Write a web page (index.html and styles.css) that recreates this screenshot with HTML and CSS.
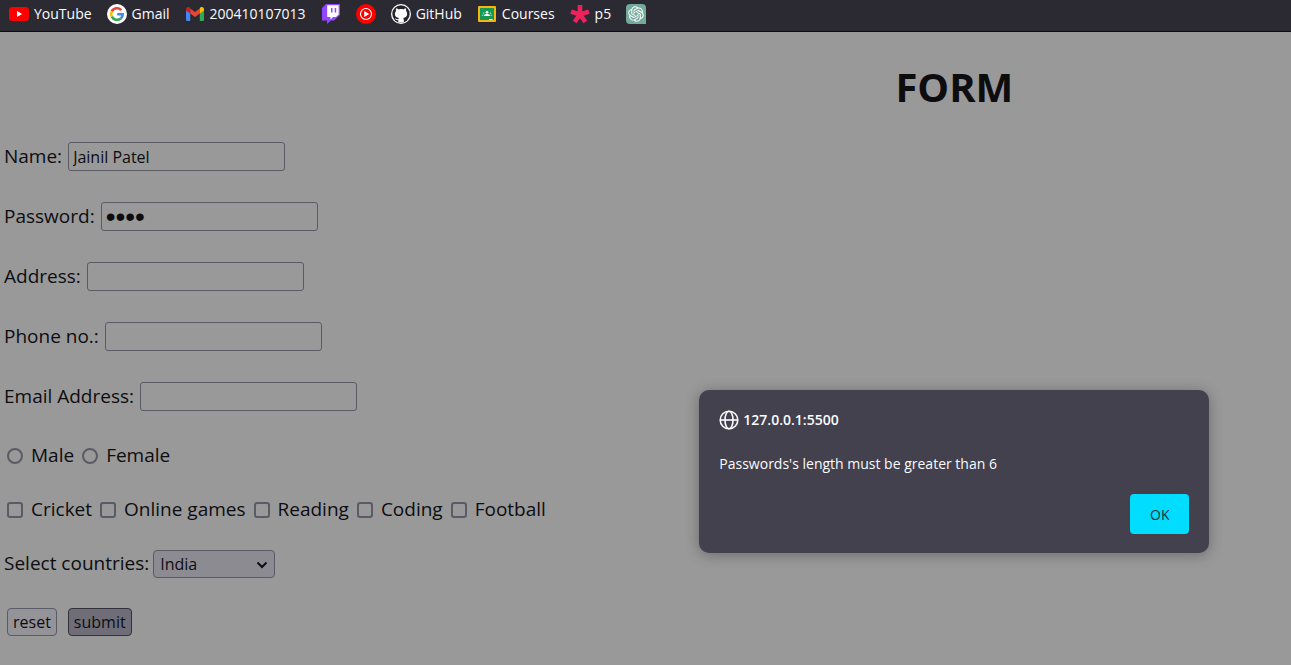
FILE: index.html
```html
<!DOCTYPE html>
<html lang="en">
<head>
<meta charset="utf-8">
<meta name="viewport" content="width=device-width, initial-scale=1">
<title>Form</title>
<link rel="stylesheet" href="styles.css">
</head>
<body>
<nav class="bookmarks" aria-label="Bookmarks">
  <a class="bookmark" href="#">
    <svg class="icon" viewBox="0 0 20 20" aria-hidden="true"><rect y="3" width="20" height="14" rx="3.5" fill="#f00"/><path d="M8 7v6l5.2-3z" fill="#fff"/></svg>
    <span>YouTube</span>
  </a>
  <a class="bookmark" href="#">
    <svg class="icon" viewBox="0 0 20 20" aria-hidden="true"><circle cx="10" cy="10" r="10" fill="#fff"/><g fill="none" stroke-width="2.6"><path d="M14.2 6.1A5.8 5.8 0 0 0 4.8 7.4" stroke="#ea4335"/><path d="M4.8 7.4a5.8 5.8 0 0 0 0 5.2" stroke="#fbbc05"/><path d="M4.8 12.6a5.8 5.8 0 0 0 9 1.8" stroke="#34a853"/><path d="M13.8 14.4a5.6 5.6 0 0 0 1.9-4.2H10.2" stroke="#4285f4"/></g></svg>
    <span>Gmail</span>
  </a>
  <a class="bookmark" href="#">
    <svg class="icon" viewBox="0 0 20 20" aria-hidden="true"><path d="M1 5.5l4.2 3.2V17H2.3A1.3 1.3 0 0 1 1 15.700z" fill="#4285f4"/><path d="M19 5.500l-4.200 3.200V17h2.900a1.300 1.300 0 0 0 1.300-1.300z" fill="#34a853"/><path d="M5.200 4.500L10 8.100l4.800-3.600v5L10 13.100 5.200 9.500z" fill="#ea4335"/><path d="M1 5.200c0-2 2.200-2.800 3.600-1.700l.6.500v5.500L1 6.400z" fill="#c5221f"/><path d="M19 5.200c0-2-2.200-2.800-3.600-1.700l-.6.500v5.500L19 6.400z" fill="#fbbc04"/></svg>
    <span>200410107013</span>
  </a>
  <a class="bookmark" href="#" aria-label="Twitch">
    <svg class="icon" viewBox="0 0 20 20" aria-hidden="true"><path d="M5 0L1 4v12.500h5V20l4-3.500h3L19 11V0z" fill="#9146ff"/><path d="M6.200 1.300h11.500v9.100L15 12.900h-3l-2.500 2.500v-2.500H6.200z" fill="#fff"/><path d="M10 4h1.500v4.500H10zM13.700 4h1.500v4.500h-1.500z" fill="#9146ff"/></svg>
  </a>
  <a class="bookmark" href="#" aria-label="YouTube Music">
    <svg class="icon" viewBox="0 0 20 20" aria-hidden="true"><circle cx="10" cy="10" r="10" fill="#f00"/><circle cx="10" cy="10" r="5.500" fill="none" stroke="#fff" stroke-width="1.100"/><path d="M8.200 7v6l5-3z" fill="#fff"/></svg>
  </a>
  <a class="bookmark" href="#">
    <svg class="icon" viewBox="0 0 20 20" aria-hidden="true"><circle cx="10" cy="10" r="10" fill="#fff"/><circle cx="10" cy="10" r="8.700" fill="#24232b"/><path d="M7.300 18.600v-2.400c-2 .4-2.600-.7-3.200-1.700 1.300-.2 1.500 1 3.300.7l.5-1.100c-2.500-.4-4-1.600-4-4.300 0-1.200.4-2.100 1.100-2.800-.2-.8-.2-1.700.2-2.800 1.100.1 2 .7 2.700 1.200 1.400-.4 2.900-.4 4.300 0 .7-.5 1.600-1.100 2.700-1.200.4 1.100.4 2 .2 2.800.7.7 1.100 1.600 1.100 2.800 0 2.700-1.500 3.900-4 4.300.4.500.6 1 .6 1.900v2.600z" fill="#fff"/></svg>
    <span>GitHub</span>
  </a>
  <a class="bookmark" href="#">
    <svg class="icon" viewBox="0 0 20 20" aria-hidden="true"><rect x="1" y="2" width="18" height="16" rx="1" fill="#f6b511"/><rect x="3" y="4" width="14" height="12" fill="#159957"/><circle cx="10" cy="8.300" r="1.400" fill="#fff"/><path d="M6.700 12c0-1.700 2-2.100 3.300-2.100s3.300.4 3.300 2.100z" fill="#fff"/><circle cx="6.500" cy="9.200" r=".9" fill="#76c69e"/><circle cx="13.500" cy="9.200" r=".9" fill="#76c69e"/><path d="M4.700 12c0-1.200 1-1.500 2-1.500L6 12zM15.300 12c0-1.200-1-1.500-2-1.500L14 12z" fill="#76c69e"/><path d="M12 15h3.500v1H12z" fill="#fff"/></svg>
    <span>Courses</span>
  </a>
  <a class="bookmark" href="#">
    <svg class="icon" viewBox="0 0 20 20" aria-hidden="true"><path d="M10 10.500V1M10 10.500L1 7.600M10 10.500l9-2.900M10 10.500l-5.400 7.500M10 10.500l5.400 7.500" stroke="#ed225d" stroke-width="4.600"/></svg>
    <span>p5</span>
  </a>
  <a class="bookmark" href="#" aria-label="ChatGPT">
    <svg class="icon" viewBox="0 0 20 20" aria-hidden="true"><path d="M4 0h12a4 4 0 0 1 4 4v16H4a4 4 0 0 1-4-4V4a4 4 0 0 1 4-4z" fill="#74aa9c"/><path transform="translate(2.200 2.200) scale(.65)" fill="#fff" d="M22.282 9.821a5.985 5.985 0 0 0-.516-4.910 6.046 6.046 0 0 0-6.510-2.900A6.065 6.065 0 0 0 4.981 4.182a5.985 5.985 0 0 0-3.998 2.900 6.046 6.046 0 0 0 .743 7.097 5.980 5.980 0 0 0 .511 4.911 6.051 6.051 0 0 0 6.515 2.900A5.985 5.985 0 0 0 13.260 24a6.056 6.056 0 0 0 5.772-4.206 5.990 5.990 0 0 0 3.998-2.900 6.056 6.056 0 0 0-.748-7.073zM13.260 22.430a4.476 4.476 0 0 1-2.876-1.041l.141-.080 4.779-2.758a.795.795 0 0 0 .393-.681v-6.737l2.020 1.169a.071.071 0 0 1 .038.052v5.583a4.504 4.504 0 0 1-4.495 4.493zM3.600 18.304a4.471 4.471 0 0 1-.535-3.014l.142.085 4.783 2.758a.771.771 0 0 0 .781 0l5.843-3.368v2.332a.080.080 0 0 1-.033.062L9.740 19.950a4.500 4.500 0 0 1-6.140-1.646zM2.341 7.896a4.485 4.485 0 0 1 2.366-1.973V11.600a.766.766 0 0 0 .388.677l5.815 3.354-2.020 1.169a.076.076 0 0 1-.071 0l-4.830-2.787A4.504 4.504 0 0 1 2.341 7.872zm16.596 3.856l-5.833-3.388L15.119 7.200a.076.076 0 0 1 .071 0l4.830 2.791a4.494 4.494 0 0 1-.676 8.105v-5.678a.790.790 0 0 0-.407-.667zm2.011-3.023l-.142-.085-4.774-2.782a.776.776 0 0 0-.785 0L9.409 9.230V6.897a.066.066 0 0 1 .028-.061l4.830-2.787a4.500 4.500 0 0 1 6.681 4.660zM8.307 12.863l-2.020-1.164a.080.080 0 0 1-.038-.057V6.075a4.500 4.500 0 0 1 7.376-3.454l-.142.081-4.778 2.758a.795.795 0 0 0-.393.682zm1.098-2.366l2.602-1.500 2.607 1.500v3l-2.597 1.500-2.607-1.500z"/></svg>
  </a>
</nav>

<main class="page">
  <h1 class="title">FORM</h1>
  <form class="form">
    <div class="fields">
      <div class="field"><label for="name">Name:</label><input class="text-box" id="name" type="text" value="Jainil Patel"></div>
      <div class="field"><label for="password">Password:</label><input class="text-box password" id="password" type="password" value="1234"></div>
      <div class="field"><label for="address">Address:</label><input class="text-box" id="address" type="text"></div>
      <div class="field"><label for="phone">Phone no.:</label><input class="text-box" id="phone" type="tel"></div>
      <div class="field"><label for="email">Email Address:</label><input class="text-box" id="email" type="email"></div>
    </div>
    <div class="choices">
      <div class="options">
        <label class="option"><input class="tick radio" type="radio" name="gender">Male</label>
        <label class="option"><input class="tick radio" type="radio" name="gender">Female</label>
      </div>
      <div class="options">
        <label class="option"><input class="tick" type="checkbox">Cricket</label>
        <label class="option"><input class="tick" type="checkbox">Online games</label>
        <label class="option"><input class="tick" type="checkbox">Reading</label>
        <label class="option"><input class="tick" type="checkbox">Coding</label>
        <label class="option"><input class="tick" type="checkbox">Football</label>
      </div>
      <div class="country">
        <label for="country">Select countries:</label>
        <span class="select-wrap">
          <select class="select" id="country"><option>India</option></select>
          <svg class="chevron" viewBox="0 0 12 8" aria-hidden="true"><path d="M1.500 1.500L6 6l4.500-4.500" fill="none" stroke="#0d0d10" stroke-width="2"/></svg>
        </span>
      </div>
    </div>
    <div class="actions">
      <button class="button" type="reset">reset</button>
      <button class="button pressed" type="button">submit</button>
    </div>
  </form>
</main>

<div class="overlay">
  <section class="dialog" role="alertdialog" aria-labelledby="origin" aria-describedby="message">
    <h2 class="origin" id="origin">
      <svg class="icon" viewBox="0 0 20 20" fill="none" stroke="#fbfbfe" stroke-width="1.600" aria-hidden="true"><circle cx="10" cy="10" r="8.800"/><ellipse cx="10" cy="10" rx="4" ry="8.800"/><path d="M1 10h18"/></svg>
      127.0.0.1:5500
    </h2>
    <p class="message" id="message">Passwords's length must be greater than 6</p>
    <button class="ok" type="button">OK</button>
  </section>
</div>
</body>
</html>
```
FILE: styles.css
```css
* {
  box-sizing: border-box;
}

body {
  margin: 0;
  min-height: 100vh;
  background: #99999a;
  color: #0d0d10;
  font: 19px/27px "Open Sans", "Noto Sans", sans-serif;
}

.bookmarks {
  display: flex;
  align-items: center;
  gap: 15px;
  height: 32px;
  padding: 0 9px 3px;
  background: #2b2a33;
  border-bottom: 1px solid #0c0c0d;
  font-size: 14px;
  line-height: 20px;
}

.bookmark {
  display: flex;
  align-items: center;
  gap: 5px;
  color: #fbfbfe;
  text-decoration: none;
}

.icon {
  flex: none;
  width: 20px;
  height: 20px;
}

.title {
  margin: 0;
  padding: 27px 2px 27px 48%;
  font-size: 40px;
  line-height: 56px;
  font-weight: 700;
  text-align: center;
}

.form {
  display: flex;
  flex-direction: column;
  gap: 31px;
  padding: 0 4px 28px;
}

.fields {
  display: flex;
  flex-direction: column;
  gap: 31px;
}

.field {
  display: flex;
  align-items: center;
  gap: 6px;
}

.text-box {
  width: 217px;
  height: 29px;
  padding: 0 4px;
  border: 1px solid #5b5b66;
  border-radius: 3px;
  background: transparent;
  color: inherit;
  font: 16px "Open Sans", "Noto Sans", sans-serif;
}

.password {
  font: 28px "Liberation Sans", sans-serif;
}

.choices {
  display: flex;
  flex-direction: column;
  gap: 27px;
}

.options {
  display: flex;
  flex-wrap: wrap;
  gap: 8px;
  padding-left: 3px;
}

.option {
  display: flex;
  align-items: center;
  gap: 8px;
}

.tick {
  appearance: none;
  width: 16px;
  height: 16px;
  margin: 0;
  border: 2px solid #5b5b66;
  border-radius: 3px;
}

.radio {
  border-radius: 50%;
}

.country {
  display: flex;
  align-items: center;
  gap: 4px;
  height: 27px;
}

.select-wrap {
  position: relative;
  display: flex;
}

.select {
  appearance: none;
  width: 122px;
  height: 28px;
  padding: 0 6px;
  border: 1px solid #5b5b66;
  border-radius: 4px;
  background: #8c8b92;
  color: inherit;
  font: 16px "Open Sans", "Noto Sans", sans-serif;
}

.chevron {
  position: absolute;
  top: 11px;
  right: 7px;
  width: 12px;
  height: 8px;
  pointer-events: none;
}

.actions {
  display: flex;
  gap: 11px;
  padding-left: 3px;
}

.button {
  height: 28px;
  padding: 0 5px;
  border: 1px solid #5b5b66;
  border-radius: 4px;
  background: #949398;
  color: inherit;
  font: 16px "Open Sans", "Noto Sans", sans-serif;
}

.pressed {
  border-color: #33323a;
  background: #6e6d78;
}

.overlay {
  position: absolute;
  top: 390px;
  right: 2px;
  left: 48%;
  display: flex;
  justify-content: center;
}

.dialog {
  display: flex;
  flex-direction: column;
  width: 510px;
  padding: 20px 20px 19px;
  border-radius: 10px;
  background: #42414d;
  box-shadow: 0 2px 14px rgba(0, 0, 0, 0.3);
  color: #fbfbfe;
  font-size: 14px;
  line-height: 20px;
}

.origin {
  display: flex;
  align-items: center;
  gap: 4px;
  margin: 0;
  font-size: 14px;
  font-weight: 600;
}

.message {
  margin: 24px 0 20px;
}

.ok {
  align-self: flex-end;
  width: 59px;
  height: 40px;
  border: 0;
  border-radius: 4px;
  background: #00ddff;
  color: #2b2a33;
  font: 14px "Open Sans", "Noto Sans", sans-serif;
}
```
